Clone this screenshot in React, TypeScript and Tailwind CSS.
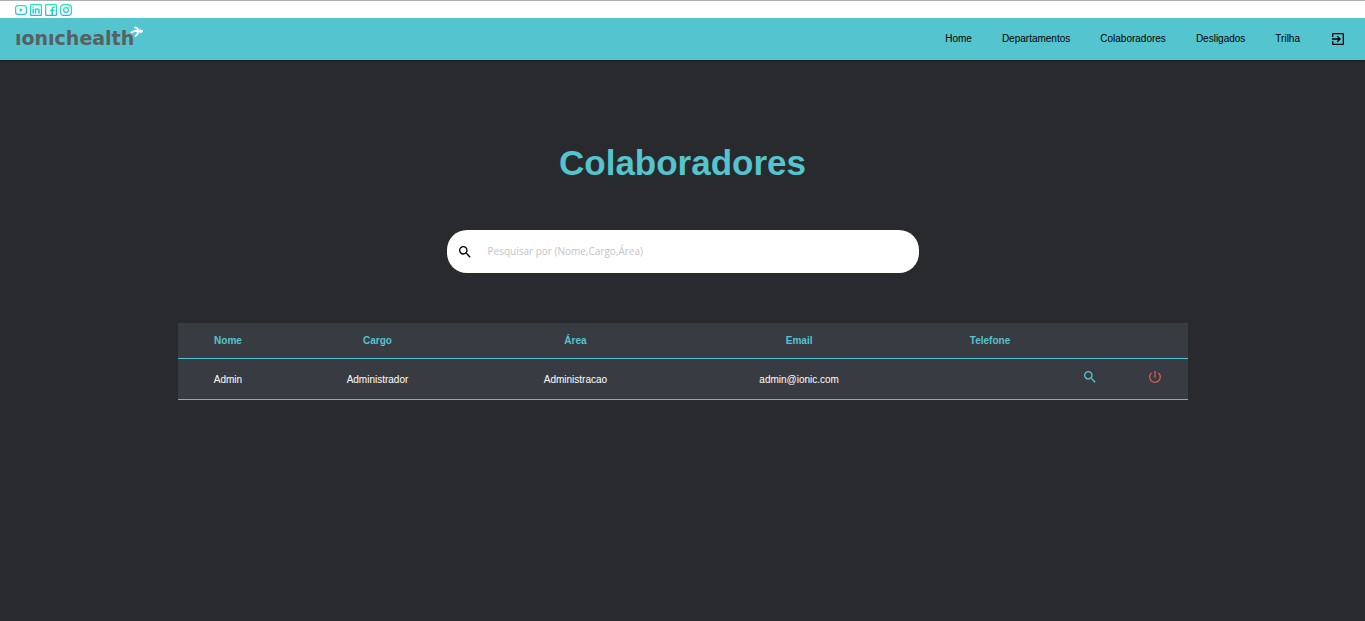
import { MdExitToApp, MdPowerSettingsNew, MdSearch } from 'react-icons/md'

const links = ['Home', 'Departamentos', 'Colaboradores', 'Desligados', 'Trilha']

const people = [
  { nome: 'Admin', cargo: 'Administrador', area: 'Administracao', email: 'admin@ionic.com', telefone: '' },
]

function SocialIcons() {
  const common = { fill: 'none', stroke: 'url(#social)', strokeWidth: 1.3 }
  return (
    <>
      <svg width="0" height="0" className="absolute" aria-hidden="true">
        <defs>
          <linearGradient id="social" gradientUnits="userSpaceOnUse" x1="0" y1="0" x2="0" y2="12">
            <stop offset="0" stopColor="#2cecb0" />
            <stop offset="1" stopColor="#28b4f0" />
          </linearGradient>
        </defs>
      </svg>
      <a href="#youtube" aria-label="YouTube">
        <svg className="block size-3" viewBox="0 0 12 12" {...common}>
          <rect x="0.6" y="1.6" width="10.8" height="8.8" rx="2.2" />
          <path d="M4.6 4v4L8 6z" fill="url(#social)" stroke="none" />
        </svg>
      </a>
      <a href="#linkedin" aria-label="LinkedIn">
        <svg className="block size-3" viewBox="0 0 12 12" {...common}>
          <rect x="0.6" y="0.6" width="10.8" height="10.8" rx="1" />
          <path d="M3.2 4.8V9.6M3.21 2.4V3.8M5.5 9.6V4.6M5.5 6.6C5.5 4.5 9 4.3 9 6.6V9.6" strokeWidth="1.6" />
        </svg>
      </a>
      <a href="#facebook" aria-label="Facebook">
        <svg className="block size-3" viewBox="0 0 12 12" {...common}>
          <rect x="0.6" y="0.6" width="10.8" height="10.8" rx="1" />
          <path d="M7.2 11.4V4.8Q7.2 3.2 8.6 3.2H9.8M5.2 6.5H9.6" strokeWidth="1.6" />
        </svg>
      </a>
      <a href="#instagram" aria-label="Instagram">
        <svg className="block size-3" viewBox="0 0 12 12" {...common}>
          <rect x="0.6" y="0.6" width="10.8" height="10.8" rx="3.2" />
          <circle cx="6" cy="6" r="2.4" />
          <circle cx="9" cy="3" r="0.8" fill="url(#social)" stroke="none" />
        </svg>
      </a>
    </>
  )
}

function Logo() {
  return (
    <a href="#home" aria-label="ionichealth" className="flex items-start pb-0.5 text-[#566065]">
      <span className="font-['DejaVu_Sans',sans-serif] text-[19px] leading-6 font-bold">ıonıchealth</span>
      <svg className="-ml-1 h-3 w-[14px]" viewBox="0 0 14 12" fill="none" stroke="#fff" strokeLinecap="round">
        <path d="M5 1.5Q8.5 1.8 8.3 5.5Q7.8 8.8 5.5 10" strokeWidth="1.8" />
        <path d="M1.5 6.5Q4.5 4.3 7.5 5.3H12" strokeWidth="2" />
        <path d="M10 3.5L12.8 5.3L10 7" strokeWidth="1" />
      </svg>
    </a>
  )
}

export default function App() {
  return (
    <div className="min-h-screen bg-[#292a2d] font-['Liberation_Sans',Arial,sans-serif] text-[10px]">
      <div className="flex h-[18px] items-center gap-[3px] border-t border-[#adadb3] bg-white px-[15px] pt-px">
        <SocialIcons />
      </div>
      <header className="flex h-[42px] items-center justify-between bg-[#54c4ce] pr-[19px] pl-[15px] shadow-[0_1px_2px_rgba(0,0,0,0.3)]">
        <Logo />
        <nav className="flex items-center gap-[30px] text-black">
          {links.map((l) => (
            <a key={l} href={'#' + l.toLowerCase()} className="pb-0.5">
              {l}
            </a>
          ))}
          <button type="button" aria-label="Sair">
            <MdExitToApp className="size-4" />
          </button>
        </nav>
      </header>
      <main className="flex flex-col items-center">
        <h1 className="mt-20 text-[35px] leading-[46px] font-bold text-[#54c4ce]">Colaboradores</h1>
        <label className="mt-11 flex h-[43px] w-[472px] max-w-full items-center gap-[15px] rounded-[20px] bg-white px-[10px] text-black">
          <MdSearch className="size-4 shrink-0" />
          <input
            type="search"
            aria-label="Pesquisar"
            placeholder="Pesquisar por (Nome,Cargo,Área)"
            className="min-w-0 flex-1 bg-transparent font-['Open_Sans',sans-serif] text-[10px] outline-none placeholder:text-[#c4c4c4]"
          />
        </label>
        <table className="mt-[50px] w-[74%] max-w-[1010px] table-fixed border-separate border-spacing-0 bg-[#393b42] text-center">
          <colgroup>
            <col className="w-[10%]" />
            <col className="w-[19.6%]" />
            <col className="w-[19.6%]" />
            <col className="w-[24.7%]" />
            <col className="w-[13.1%]" />
            <col className="w-[6.6%]" />
            <col className="w-[6.4%]" />
          </colgroup>
          <thead>
            <tr className="h-9 text-[#54c4ce] *:border-b *:border-[#54c4ce]">
              <th>Nome</th>
              <th>Cargo</th>
              <th>Área</th>
              <th>Email</th>
              <th>Telefone</th>
              <td />
              <td />
            </tr>
          </thead>
          <tbody>
            {people.map((p) => (
              <tr key={p.email} className="h-[41px] text-white *:border-b *:border-[#54c4ce]">
                <td>{p.nome}</td>
                <td>{p.cargo}</td>
                <td>{p.area}</td>
                <td>{p.email}</td>
                <td>{p.telefone}</td>
                <td>
                  <button type="button" aria-label="Ver detalhes" className="mx-auto block pb-1 text-[#54c4ce]">
                    <MdSearch className="size-4" />
                  </button>
                </td>
                <td>
                  <button type="button" aria-label="Desligar" className="mx-auto block pb-1 text-[#d9594c]">
                    <MdPowerSettingsNew className="size-4" />
                  </button>
                </td>
              </tr>
            ))}
          </tbody>
        </table>
      </main>
    </div>
  )
}
